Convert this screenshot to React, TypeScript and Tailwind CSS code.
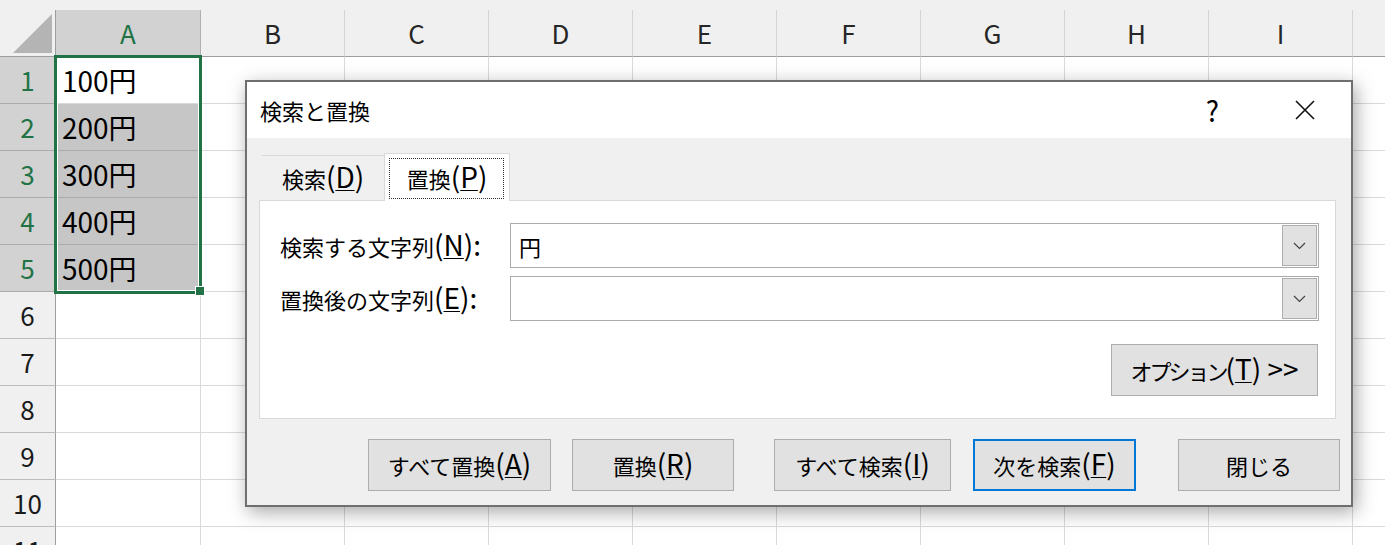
// Excel の「検索と置換」ダイアログ — シートの上に置換タブを開いた状態

const COLS = ["A", "B", "C", "D", "E", "F", "G", "H", "I", "J"];
const ROWS = [1, 2, 3, 4, 5, 6, 7, 8, 9, 10, 11];
const DATA: Record<number, string> = {
  1: "100円",
  2: "200円",
  3: "300円",
  4: "400円",
  5: "500円",
};

function Key({ k, tail }: { k: string; tail?: string }) {
  return (
    <span className="text-[28px] leading-[0px]">
      (<span className="underline decoration-1 underline-offset-[2px]">{k}</span>){tail}
    </span>
  );
}

function Chevron() {
  return (
    <svg width="13" height="8" viewBox="0 0 13 8" fill="none">
      <polyline points="1,1 6.5,6.5 12,1" stroke="#444" strokeWidth="1.2" />
    </svg>
  );
}

function Combo({ value }: { value?: string }) {
  return (
    <div className="flex-1 h-[45px] border border-[#ababab] bg-white flex items-center">
      <span className="pl-[8px] text-[22px] leading-none">{value}</span>
      <div className="ml-auto mr-px w-[35px] h-[41px] bg-[#e1e1e1] border border-[#adadad] flex items-center justify-center">
        <Chevron />
      </div>
    </div>
  );
}

function Btn({
  children,
  className,
  primary,
}: {
  children: React.ReactNode;
  className: string;
  primary?: boolean;
}) {
  return (
    <div
      className={
        "h-[52px] bg-[#e1e1e1] flex items-center justify-center text-[22px] leading-none shrink-0 " +
        (primary ? "border-2 border-[#0078d7] " : "border border-[#adadad] ") +
        className
      }
    >
      <span>{children}</span>
    </div>
  );
}

function Sheet() {
  return (
    <div className="flex flex-col">
      <div className="h-[10px] bg-[#f0f0f0]" />
      <div className="grid grid-cols-[56px_145px_repeat(8,144px)_144px] auto-rows-[47px]">
        {/* corner */}
        <div className="bg-[#f0f0f0] border-r border-b border-[#9e9e9e] flex items-end justify-end pr-[3px] pb-[3px]">
          <svg width="39" height="39" viewBox="0 0 39 39">
            <polygon points="0,39 39,39 39,0" fill="#b4b4b4" />
          </svg>
        </div>
        {COLS.map((c) => (
          <div
            key={c}
            className={
              "border-b border-r flex items-center justify-center text-[26px] leading-none " +
              (c === "A"
                ? "bg-[#d2d2d2] text-[#217346] border-b-[#9e9e9e] border-r-[#b0b0b0]"
                : "bg-[#f0f0f0] text-[#262626] border-b-[#9e9e9e] border-r-[#d4d4d4]")
            }
          >
            {c === "J" ? "" : c}
          </div>
        ))}
        {ROWS.map((r) => {
          const sel = r <= 5;
          return [
            <div
              key={"h" + r}
              className={
                "border-r border-r-[#9e9e9e] border-b flex items-center justify-center text-[26px] leading-none " +
                (sel
                  ? "bg-[#d2d2d2] text-[#217346] border-b-[#ababab]"
                  : "bg-[#f0f0f0] text-[#1a1a1a] border-b-[#bdbdbd]")
              }
            >
              {r}
            </div>,
            ...COLS.map((c) => {
              const data = c === "A" ? DATA[r] : undefined;
              const gray = c === "A" && r >= 2 && r <= 5;
              return (
                <div
                  key={c + r}
                  className={
                    "border-r border-b flex items-center pl-[6px] text-[28px] leading-none text-black " +
                    (gray ? "bg-[#c6c6c6] border-[#ababab]" : "bg-white border-[#dadada]")
                  }
                >
                  {data}
                </div>
              );
            }),
          ];
        })}
      </div>
    </div>
  );
}

export default function App() {
  return (
    <div className="relative w-[1385px] h-[545px] overflow-hidden bg-white font-['Noto_Sans_CJK_JP','Noto_Sans',sans-serif] text-black">
      <Sheet />

      {/* selection A1:A5 */}
      <div className="absolute left-[54px] top-[55px] w-[148px] h-[239px] border-[3px] border-[#217346] shadow-[inset_0_0_0_1px_#fff]" />
      <div className="absolute left-[195px] top-[286px] w-[10px] h-[10px] bg-[#217346] border border-white" />

      {/* dialog */}
      <div className="absolute left-[245px] top-[80px] w-[1108px] h-[427px] border-2 border-[#6f6f6f] bg-[#f0f0f0] shadow-[3px_5px_18px_rgba(0,0,0,0.35)] flex flex-col">
        <div className="h-[56px] shrink-0 bg-white flex items-center pl-[13px]">
          <span className="text-[22px] leading-none">検索と置換</span>
          <span className="ml-auto text-[28px] leading-none">?</span>
          <svg className="ml-[76px] mr-[36px]" width="20" height="20" viewBox="0 0 20 20">
            <path d="M1 1 L19 19 M19 1 L1 19" stroke="#111" strokeWidth="1.6" />
          </svg>
        </div>

        <div className="flex-1 pl-[12px] pr-[15px] pt-[15px] flex flex-col">
          {/* tabs */}
          <div className="flex items-end h-[47px] pl-[3px]">
            <div className="w-[122px] h-[45px] border-t border-[#d9d9d9] flex items-center justify-center text-[22px] leading-none">
              <span>
                検索<Key k="D" />
              </span>
            </div>
            <div className="relative z-10 -mb-px w-[126px] h-[48px] bg-white border border-b-0 border-[#d9d9d9] flex items-center justify-center text-[22px] leading-none">
              <div className="absolute left-[4px] top-[4px] right-[5px] bottom-[2px] border border-dotted border-[#333]" />
              <span>
                置換<Key k="P" />
              </span>
            </div>
          </div>

          {/* panel */}
          <div className="h-[219px] bg-white border border-[#d9d9d9] pl-[20px] pr-[16px] pt-[22px] flex flex-col">
            <div className="flex items-center">
              <div className="w-[230px] text-[22px] leading-none">
                検索する文字列<Key k="N" tail=":" />
              </div>
              <Combo value="円" />
            </div>
            <div className="flex items-center mt-[8px]">
              <div className="w-[230px] text-[22px] leading-none">
                置換後の文字列<Key k="E" tail=":" />
              </div>
              <Combo />
            </div>
            <div className="flex justify-end mt-[23px]">
              <Btn className="w-[207px] mr-px">
                <span className="tracking-[-3px]">オプション</span>
                <Key k="T" />
                <span className="text-[28px] leading-[0px]">&nbsp;&gt;&gt;</span>
              </Btn>
            </div>
          </div>

          {/* buttons */}
          <div className="flex mt-[20px]">
            <Btn className="ml-[109px] w-[183px]">
              すべて置換<Key k="A" />
            </Btn>
            <Btn className="ml-[21px] w-[162px]">
              置換<Key k="R" />
            </Btn>
            <Btn className="ml-[40px] w-[177px]">
              すべて検索<Key k="I" />
            </Btn>
            <Btn primary className="ml-[22px] w-[163px]">
              次を検索<Key k="F" />
            </Btn>
            <Btn className="ml-[42px] w-[162px]">閉じる</Btn>
          </div>
        </div>
      </div>
    </div>
  );
}
